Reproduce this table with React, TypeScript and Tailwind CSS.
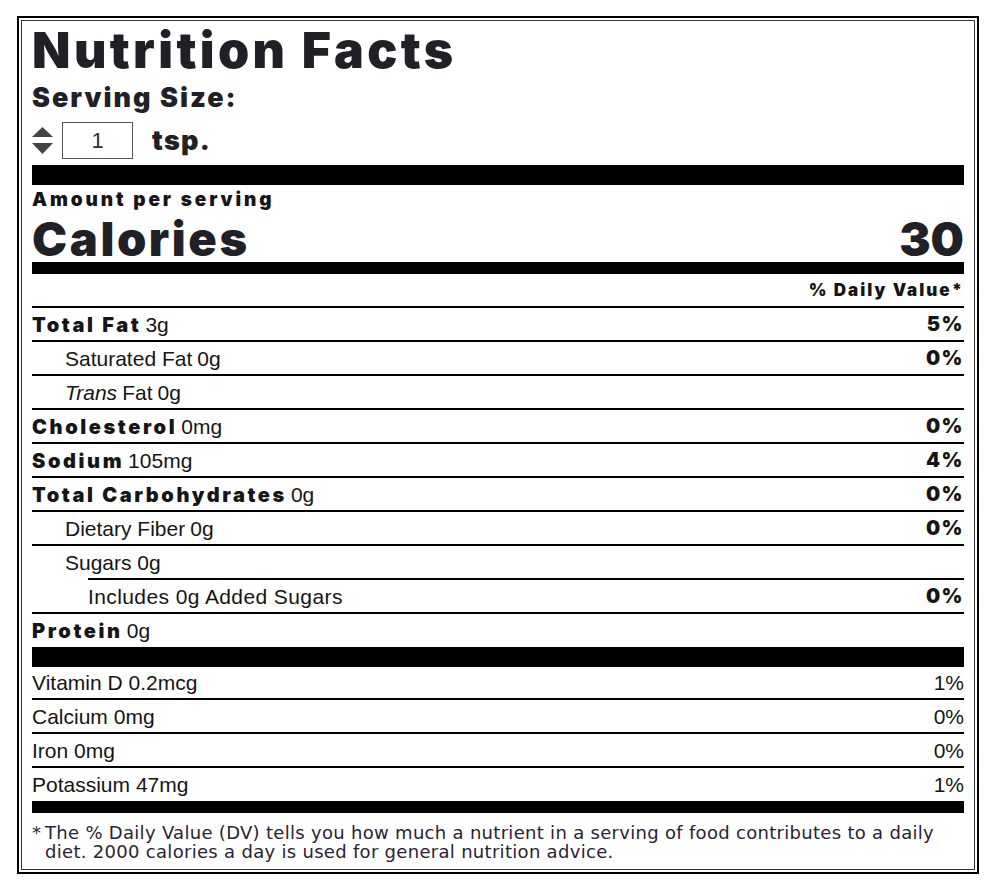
import React from 'react';

const heavy = "font-['Inter','Liberation_Sans',sans-serif] font-black";
const plain = "font-['Liberation_Sans','Arial',sans-serif]";

type Row = {
  label: string;
  amount: string;
  dv?: string;
  bold?: boolean;
  indent?: 0 | 1 | 2;
  italicLead?: string;
};

const nutrients: Row[] = [
  { label: 'Total Fat', amount: '3g', dv: '5%', bold: true },
  { label: 'Saturated Fat', amount: '0g', dv: '0%', indent: 1 },
  { label: 'Fat', italicLead: 'Trans', amount: '0g', indent: 1 },
  { label: 'Cholesterol', amount: '0mg', dv: '0%', bold: true },
  { label: 'Sodium', amount: '105mg', dv: '4%', bold: true },
  { label: 'Total Carbohydrates', amount: '0g', dv: '0%', bold: true },
  { label: 'Dietary Fiber', amount: '0g', dv: '0%', indent: 1 },
];

const vitamins = [
  { label: 'Vitamin D', amount: '0.2mcg', dv: '1%', h: 'h-[33px] border-b-2' },
  { label: 'Calcium', amount: '0mg', dv: '0%', h: 'h-[34px] border-b-2' },
  { label: 'Iron', amount: '0mg', dv: '0%', h: 'h-[34px] border-b-2' },
  { label: 'Potassium', amount: '47mg', dv: '1%', h: 'h-[33px]' },
];

const Stepper = () => (
  <svg width="21" height="28" viewBox="0 0 21 28" className="shrink-0">
    <polygon points="0,10 10.5,0 21,10" fill="#444" />
    <polygon points="0,16 21,16 10.5,27" fill="#444" />
  </svg>
);

function NutrientRow({ row }: { row: Row }) {
  const pad = row.indent === 1 ? 'pl-[33px]' : row.indent === 2 ? 'pl-[56px]' : '';
  return (
    <div className={`h-[34px] border-b-2 border-black flex items-center justify-between ${pad}`}>
      <div className="flex items-baseline">
        {row.bold ? (
          <span className={`${heavy} text-[20px] leading-none tracking-[2.6px] mr-[4px]`}>{row.label}</span>
        ) : (
          <span className={`${plain} text-[21px] leading-none mr-[5px]`}>
            {row.italicLead && <i className="mr-[5px]">{row.italicLead}</i>}
            {row.label}
          </span>
        )}
        <span className={`${plain} text-[21px] leading-none`}>{row.amount}</span>
      </div>
      {row.dv && <span className={`${heavy} text-[20px] leading-none tracking-[1.5px]`}>{row.dv}</span>}
    </div>
  );
}

export default function App() {
  return (
    <div className="bg-white min-h-[890px] pt-[16px] pl-[17px] text-[#151515]">
      <div className="w-[962px] h-[858px] border-2 border-black p-[2px]">
        <div className="h-full border border-[#333] px-[10px] flex flex-col">
          <h1 className={`${heavy} text-[50px] leading-none tracking-[3.4px] mt-[4px] text-[#1f2126]`}>Nutrition Facts</h1>
          <div className={`${heavy} text-[27px] leading-none tracking-[2px] mt-[9px] text-[#1f2126]`}>Serving Size:</div>

          <div className="flex items-center mt-[11px] h-[37px]">
            <Stepper />
            <div className={`ml-[9px] w-[71px] h-[37px] border border-[#555] flex items-center justify-center ${plain} text-[22px] text-[#333]`}>
              1
            </div>
            <span className={`${heavy} text-[27px] leading-none tracking-[1.3px] ml-[19px] text-[#1f2126]`}>tsp.</span>
          </div>

          <div className="mt-[6px] h-[20px] bg-black" />

          <div className={`${heavy} text-[19px] leading-none tracking-[2.9px] mt-[5px]`}>Amount per serving</div>
          <div className={`flex justify-between ${heavy} text-[47px] leading-none mt-[6px] text-[#1f2126]`}>
            <span className="tracking-[2.6px]">Calories</span>
            <span>30</span>
          </div>
          <div className="h-[12px] bg-black" />

          <div className="h-[34px] border-b-2 border-black flex items-end justify-end pb-[7px]">
            <span className={`${heavy} text-[17px] leading-none tracking-[2px]`}>% Daily Value*</span>
          </div>

          {nutrients.map((r) => (
            <NutrientRow key={r.label} row={r} />
          ))}

          <div className="h-[32px] flex items-center pl-[33px]">
            <span className={`${plain} text-[21px] leading-none`}>Sugars 0g</span>
          </div>
          <div className="ml-[56px] h-[2px] bg-black" />
          <div className="h-[34px] border-b-2 border-black flex items-center justify-between pl-[56px]">
            <span className={`${plain} text-[21px] leading-none tracking-[0.4px]`}>Includes 0g Added Sugars</span>
            <span className={`${heavy} text-[20px] leading-none tracking-[1.5px]`}>0%</span>
          </div>
          <div className="h-[33px] flex items-center">
            <span className={`${heavy} text-[20px] leading-none tracking-[2.6px] mr-[4px]`}>Protein</span>
            <span className={`${plain} text-[21px] leading-none`}>0g</span>
          </div>
          <div className="h-[20px] bg-black" />

          {vitamins.map((v) => (
            <div key={v.label} className={`${v.h} border-black flex items-center justify-between ${plain} text-[21px] leading-none`}>
              <span>{v.label} {v.amount}</span>
              <span>{v.dv}</span>
            </div>
          ))}
          <div className="h-[12px] bg-black" />

          <div className="flex mt-[10px] font-['DejaVu_Sans',sans-serif] text-[18px] leading-[19px] tracking-[0.3px] text-[#2a2235]">
            <span className="w-[13px] shrink-0 tracking-normal">*</span>
            <p className="whitespace-nowrap">
              The % Daily Value (DV) tells you how much a nutrient in a serving of food contributes to a daily
              <br />
              diet. 2000 calories a day is used for general nutrition advice.
            </p>
          </div>
        </div>
      </div>
    </div>
  );
}
